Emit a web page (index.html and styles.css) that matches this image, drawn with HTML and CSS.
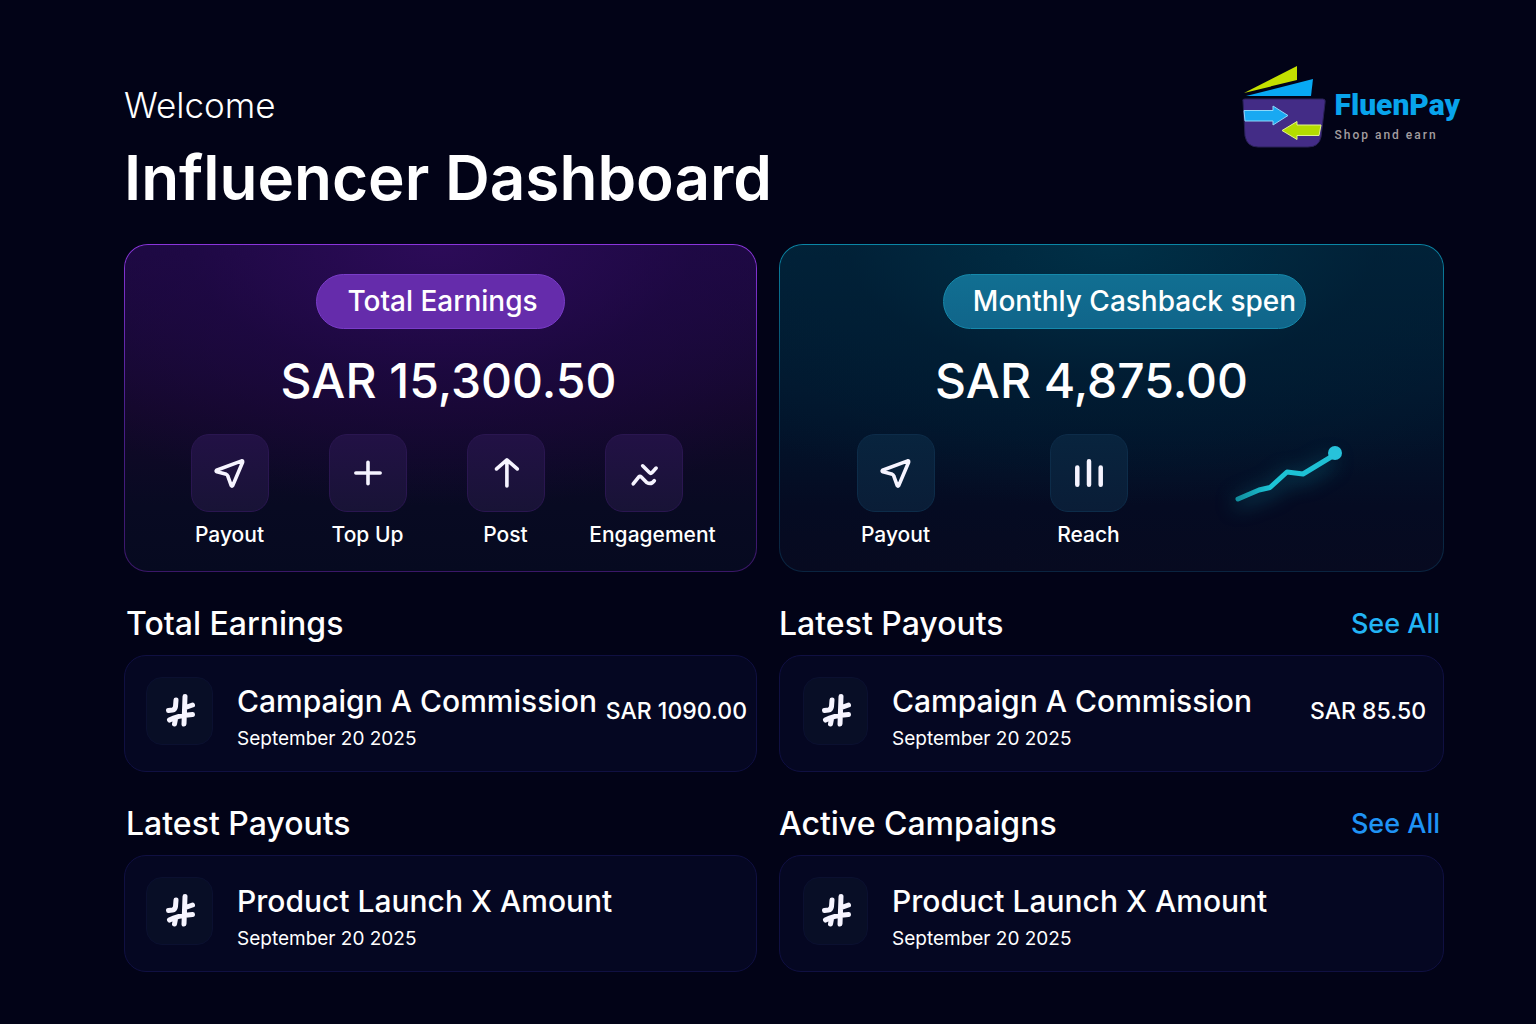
FILE: index.html
```html
<!DOCTYPE html>
<html lang="en">
<head>
    <meta charset="UTF-8">
    <meta name="viewport" content="width=device-width, initial-scale=1.0">
    <title>FluenPay - Influencer Dashboard</title>
    <link rel="stylesheet" href="styles.css">
</head>
<body>
    <!-- shared icons -->
    <svg class="icon-defs" aria-hidden="true">
        <symbol id="icon-send" viewBox="0 0 40 40">
            <path d="M33 6.500 L5 17 Q4 18 5.500 18.700 L16 21.500 Q17 21.800 17.400 23 L21.400 34 Q22.200 35.200 23 34 L34 8 Q34.300 6.200 33 6.500 Z"/>
        </symbol>
        <symbol id="icon-hash" viewBox="0 0 40 40">
            <path d="M16 9 L15.500 15.500 Q15 18.500 12.500 19 L8.500 19.500 M25 5.500 L24 33 M25.500 16.500 L32.500 14 M9.500 29 Q17 24.500 32.500 23.500 M15.500 28 L14.500 33"/>
        </symbol>
    </svg>

    <div class="page">
        <header class="header">
            <div class="titles">
                <p class="welcome">Welcome</p>
                <h1>Influencer Dashboard</h1>
            </div>
            <a href="#" class="brand">
                <svg class="brand-logo" viewBox="0 0 84 84" aria-hidden="true">
                    <path d="M2 29 L55 2 L55 16 Z" fill="#c4e000"/>
                    <path d="M4 32 L71 15 L69 32 Z" fill="#08a9f4"/>
                    <path d="M1 37 Q0 35 3 35 L81 35 Q84 35 83 39 L79 73 Q77 83 66 83 L16 83 Q5 83 3 72 Z" fill="#432c86" stroke="#2a2258"/>
                    <path d="M2 46.500 L31 46.500 L31 42 L46 51.500 L31 61 L31 57 L3 57 Z" fill="#19a9f2" stroke="#8fd8fa"/>
                    <path d="M79 61 L55 61 L55 57.500 L40 66.500 L55 75.500 L55 71.500 L77 71.500 Z" fill="#b4dc00" stroke="#e2f58a"/>
                </svg>
                <span class="brand-text">
                    <span class="brand-name">FluenPay</span>
                    <span class="brand-tagline">Shop and earn</span>
                </span>
            </a>
        </header>

        <main class="grid">
            <section class="card card-earnings">
                <h2 class="pill">Total Earnings</h2>
                <p class="amount">SAR 15,300.50</p>
                <div class="actions">
                    <button type="button" class="action">
                        <span class="tile"><svg class="icon"><use href="#icon-send"/></svg></span>
                        <span class="label">Payout</span>
                    </button>
                    <button type="button" class="action">
                        <span class="tile"><svg class="icon" viewBox="0 0 40 40"><path d="M20 8 V32 M6.500 20 H33.500"/></svg></span>
                        <span class="label">Top Up</span>
                    </button>
                    <button type="button" class="action">
                        <span class="tile"><svg class="icon" viewBox="0 0 40 40"><path d="M21 34.500 V6 M9.500 15.500 L21 5.500 L32.500 15.500"/></svg></span>
                        <span class="label">Post</span>
                    </button>
                    <button type="button" class="action">
                        <span class="tile"><svg class="icon" viewBox="0 0 40 40"><path d="M18.500 12 L26 19.500 Q27.500 21 29 19.500 L33.500 14.500 M8 32 L14 24.500 Q15.500 23 17 24.500 L23 30.500 Q28 33.500 31.500 28.500"/></svg></span>
                        <span class="label">Engagement</span>
                    </button>
                </div>
            </section>

            <section class="card card-cashback">
                <h2 class="pill">Monthly Cashback spen</h2>
                <p class="amount">SAR 4,875.00</p>
                <div class="actions">
                    <button type="button" class="action">
                        <span class="tile"><svg class="icon"><use href="#icon-send"/></svg></span>
                        <span class="label">Payout</span>
                    </button>
                    <button type="button" class="action">
                        <span class="tile"><svg class="icon icon-bars" viewBox="0 0 40 40"><path d="M7 14 V33 M20 7 V33 M33 14 V33"/></svg></span>
                        <span class="label">Reach</span>
                    </button>
                    <svg class="trend" viewBox="14 0 122 78" role="img" aria-label="Cashback trend">
                        <defs>
                            <linearGradient id="trend-line" x1="0" x2="1" y1="0" y2="0">
                                <stop offset="0" stop-color="#128f9f"/>
                                <stop offset="0.350" stop-color="#1cc4d6"/>
                                <stop offset="1" stop-color="#1fbfd3"/>
                            </linearGradient>
                        </defs>
                        <path class="trend-line" d="M9 65 L30 56 L41 53.500 L58 38 L74 40 L102 23"/>
                        <circle cx="106" cy="19" r="7" fill="#27c2db"/>
                    </svg>
                </div>
            </section>

            <section class="block">
                <div class="block-head">
                    <h2>Total Earnings</h2>
                </div>
                <article class="row">
                    <span class="row-icon"><svg class="icon"><use href="#icon-hash"/></svg></span>
                    <div class="row-text">
                        <h3>Campaign A Commission</h3>
                        <time datetime="2025-09-20">September 20 2025</time>
                    </div>
                    <span class="row-amount">SAR 1090.00</span>
                </article>
            </section>

            <section class="block block-wide">
                <div class="block-head">
                    <h2>Latest Payouts</h2>
                    <a href="#" class="see-all">See All</a>
                </div>
                <article class="row">
                    <span class="row-icon"><svg class="icon"><use href="#icon-hash"/></svg></span>
                    <div class="row-text">
                        <h3>Campaign A Commission</h3>
                        <time datetime="2025-09-20">September 20 2025</time>
                    </div>
                    <span class="row-amount">SAR 85.50</span>
                </article>
            </section>

            <section class="block">
                <div class="block-head">
                    <h2>Latest Payouts</h2>
                </div>
                <article class="row">
                    <span class="row-icon"><svg class="icon"><use href="#icon-hash"/></svg></span>
                    <div class="row-text">
                        <h3>Product Launch X Amount</h3>
                        <time datetime="2025-09-20">September 20 2025</time>
                    </div>
                </article>
            </section>

            <section class="block block-wide">
                <div class="block-head">
                    <h2>Active Campaigns</h2>
                    <a href="#" class="see-all see-all-blue">See All</a>
                </div>
                <article class="row">
                    <span class="row-icon"><svg class="icon"><use href="#icon-hash"/></svg></span>
                    <div class="row-text">
                        <h3>Product Launch X Amount</h3>
                        <time datetime="2025-09-20">September 20 2025</time>
                    </div>
                </article>
            </section>
        </main>
    </div>
</body>
</html>
```
FILE: styles.css
```css
* {
    box-sizing: border-box;
}

body {
    margin: 0;
    min-height: 100vh;
    background: #020317;
    color: #fff;
    font-family: "Inter", "Liberation Sans", sans-serif;
}

h1, h2, h3, p {
    margin: 0;
    font-weight: 500;
}

button {
    padding: 0;
    border: none;
    background: none;
    color: inherit;
    font: inherit;
    cursor: pointer;
}

a {
    text-decoration: none;
}

.icon-defs {
    display: none;
}

.icon {
    width: 40px;
    height: 40px;
    fill: none;
    stroke: #f6f4ff;
    stroke-width: 4;
    stroke-linecap: round;
    stroke-linejoin: round;
}

.page {
    padding: 64px 76px 52px 124px;
}

/* Header */
.header {
    display: flex;
    justify-content: space-between;
    align-items: flex-start;
    height: 180px;
}

.titles {
    padding-top: 20px;
}

.welcome {
    font-size: 35px;
    line-height: 42px;
    font-weight: 300;
}

h1 {
    margin-top: 10px;
    font-size: 62px;
    line-height: 84px;
    font-weight: 600;
}

.brand {
    display: flex;
    align-items: center;
    gap: 8px;
}

.brand-logo {
    width: 84px;
    height: 84px;
}

.brand-text {
    display: flex;
    flex-direction: column;
    padding-top: 22px;
    font-family: "Roboto", sans-serif;
}

.brand-name {
    color: #08a4ec;
    font-size: 30px;
    line-height: 36px;
    font-weight: 900;
}

.brand-tagline {
    color: #a39d9f;
    font-size: 12px;
    line-height: 24px;
    font-weight: 500;
    letter-spacing: 2px;
}

/* Layout */
.grid {
    display: grid;
    grid-template-columns: minmax(0, 633fr) minmax(0, 665fr);
    column-gap: 22px;
    margin-right: 16px;
}

/* Balance cards */
.card {
    display: flex;
    flex-direction: column;
    align-items: center;
    padding: 29px 0 21px;
    border: 1px solid transparent;
    border-radius: 24px;
}

.card-earnings {
    background:
        radial-gradient(ellipse 80% 80% at 50% 0, #2c0b58, rgba(32, 8, 72, 0.6) 50%, transparent) padding-box,
        linear-gradient(#1c0a40, #130829 50%, #080a22 80%, #060a20) padding-box,
        linear-gradient(#8a35dc, #4a1f8c 50%, #3a1768) border-box;
}

.card-cashback {
    background:
        radial-gradient(ellipse 80% 80% at 50% 0, #003047, rgba(0, 32, 54, 0.6) 50%, transparent) padding-box,
        linear-gradient(#02233a, #02142b 55%, #050b22 80%, #070a20) padding-box,
        linear-gradient(#0a86a6, #08344f 50%, #0a2440) border-box;
}

.pill {
    padding: 0 26px 0 30px;
    border: 1px solid #7a3cc9;
    border-radius: 28px;
    background: #652cab;
    font-size: 28px;
    line-height: 53px;
    white-space: nowrap;
}

.card-cashback .pill {
    margin-left: 26px;
    padding: 0 9px 0 29px;
    border-color: #1589ab;
    background: linear-gradient(#116f92, #10658a);
}

.amount {
    margin-top: 20px;
    padding-left: 16px;
    font-size: 48px;
    line-height: 64px;
}

.card-cashback .amount {
    padding: 0 40px 0 0;
}

.actions {
    display: grid;
    grid-template-columns: 78px 78px 78px 96px;
    column-gap: 60px;
    margin-top: 21px;
    padding-left: 10px;
}

.card-cashback .actions {
    grid-template-columns: 78px 78px 124px;
    column-gap: 115px;
    padding: 0;
}

.action {
    display: flex;
    flex-direction: column;
    align-items: center;
}

.tile {
    display: flex;
    align-items: center;
    justify-content: center;
    align-self: flex-start;
    width: 78px;
    height: 78px;
    border: 1px solid #2a1650;
    border-radius: 18px;
    background: linear-gradient(#221145, #181336);
}

.tile .icon {
    width: 36px;
    height: 36px;
}

.card-cashback .tile {
    border-color: #0d2c49;
    background: linear-gradient(#08243e, #0a1d37);
}

.tile .icon-bars {
    stroke-width: 5;
}

.label {
    margin-top: 8px;
    font-size: 21px;
    line-height: 30px;
    font-weight: 500;
    white-space: nowrap;
}

.trend {
    width: 122px;
    height: 78px;
    overflow: visible;
}

.trend-line {
    fill: none;
    stroke: url(#trend-line);
    stroke-width: 5;
    stroke-linecap: round;
    stroke-linejoin: round;
    filter: drop-shadow(0 4px 10px #0a6f85);
}

/* Lists */
.block {
    padding-top: 30px;
}

.block-head {
    display: flex;
    justify-content: space-between;
    align-items: center;
    padding: 0 4px 0 2px;
    line-height: 44px;
}

.block-wide .block-head {
    padding-left: 0;
}

.block-head h2 {
    font-size: 32px;
}

.see-all {
    color: #22b4f5;
    font-size: 27px;
    font-weight: 500;
}

.see-all-blue {
    color: #1f93f5;
}

.row {
    display: flex;
    align-items: center;
    height: 117px;
    margin-top: 9px;
    padding: 0 9px 6px 21px;
    border: 1px solid #101042;
    border-radius: 22px;
    background: #050722;
}

.block-wide .row {
    padding: 0 17px 6px 23px;
}

.row-icon {
    display: flex;
    align-items: center;
    justify-content: center;
    flex: none;
    width: 67px;
    height: 68px;
    border: 1px solid #0b1030;
    border-radius: 16px;
    background: #080e26;
}

.block-wide .row-icon {
    width: 65px;
}

.row-icon .icon {
    stroke-width: 5;
}

.row-text {
    margin-left: 24px;
    padding-top: 14px;
    white-space: nowrap;
}

.row h3 {
    font-size: 30px;
    line-height: 42px;
}

.row time {
    display: block;
    font-size: 19px;
    line-height: 34px;
}

.row-amount {
    margin-left: auto;
    font-size: 23px;
    font-weight: 500;
    white-space: nowrap;
}
```
